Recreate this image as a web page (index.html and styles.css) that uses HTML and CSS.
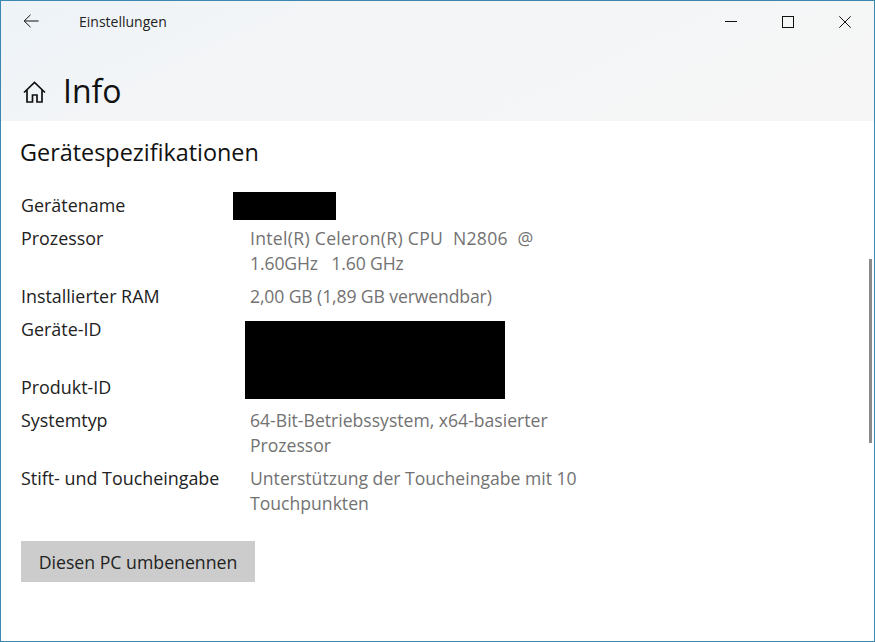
FILE: index.html
```html
<!DOCTYPE html>
<html lang="de">
<head>
<meta charset="utf-8">
<title>Einstellungen</title>
<link rel="stylesheet" href="styles.css">
</head>
<body>
<div class="window">
  <header class="header">
    <div class="titlebar">
      <svg class="back" width="16" height="14" viewBox="0 0 16 14"><path d="M7.500 .8 1.200 7l6.300 6.200M1.200 7H15.600" fill="none" stroke="#111" stroke-width="1"/></svg>
      <span class="apptitle">Einstellungen</span>
      <div class="controls">
        <svg width="12" height="12" viewBox="0 0 12 12"><path d="M0 5.500H12" stroke="#111" stroke-width="1"/></svg>
        <svg width="12" height="12" viewBox="0 0 12 12"><rect x=".5" y=".5" width="11" height="11" fill="none" stroke="#111" stroke-width="1"/></svg>
        <svg width="12" height="12" viewBox="0 0 12 12"><path d="M.3 .3 11.700 11.700M11.700 .3 .3 11.700" stroke="#111" stroke-width="1"/></svg>
      </div>
    </div>
    <div class="pagehead">
      <svg width="23" height="23" viewBox="0 0 23 23"><path d="M1 11.500 11.500 1.500 22 11.500M4 9v12h5.500v-7h4.500v7H19V9" fill="none" stroke="#111" stroke-width="1.700"/></svg>
      <h1>Info</h1>
    </div>
  </header>
  <main class="content">
    <h2>Gerätespezifikationen</h2>
    <dl class="specs">
      <dt>Gerätename</dt><dd></dd>
      <dt>Prozessor</dt><dd><span class="wide">Intel(R) Celeron(R) CPU&nbsp; N2806&nbsp; @</span><br><span class="narrow">1.60GHz&nbsp; &nbsp;1.60 GHz</span></dd>
      <dt>Installierter RAM</dt><dd><span class="narrow">2,00 GB (1,89 GB verwendbar)</span></dd>
      <dt class="tall">Geräte-ID</dt><dd class="tall"></dd>
      <dt>Produkt-ID</dt><dd></dd>
      <dt>Systemtyp</dt><dd>64-Bit-Betriebssystem, x64-basierter<br>Prozessor</dd>
      <dt>Stift- und Toucheingabe</dt><dd>Unterstützung der Toucheingabe mit 10<br>Touchpunkten</dd>
    </dl>
    <button class="rename">Diesen PC umbenennen</button>
    <div class="redact redact-name"></div>
    <div class="redact redact-ids"></div>
    <div class="scrollthumb"></div>
  </main>
</div>
</body>
</html>
```
FILE: styles.css
```css
* { box-sizing: border-box; }
html, body { margin: 0; height: 100%; }
body { font-family: "Open Sans", "Noto Sans", sans-serif; background: #fff; color: #111; }
.window {
  width: 875px; height: 642px;
  border: 1px solid #3a87b0;
  display: flex; flex-direction: column;
  overflow: hidden;
}
.header {
  height: 120px; flex: none;
  background: linear-gradient(155deg, #edf3f8 0%, #f3f5f7 30%, #f6f6f6 100%);
  display: flex; flex-direction: column;
}
.titlebar { height: 40px; display: flex; align-items: center; padding-left: 22px; }
.back { flex: none; }
.apptitle { margin-left: 40px; font-size: 14px; color: #222; }
.controls { margin-left: auto; display: flex; gap: 45px; padding: 2px 23px 0 0; align-items: center; }
.controls svg { display: block; }
.pagehead { display: flex; align-items: center; padding: 25px 0 0 22px; gap: 17px; }
.pagehead svg { flex: none; margin-top: 3px; }
h1 { margin: 0; font-size: 32px; font-weight: 400; line-height: 50px; color: #111; }
.content { position: relative; flex: 1; padding: 14px 0 0 20px; }
h2 { margin: 0 0 24px -1px; font-size: 23.400px; font-weight: 400; line-height: 34px; color: #111; }
.specs { margin: 0; display: grid; grid-template-columns: 229px 340px; row-gap: 8px; font-size: 17.600px; line-height: 25px; }
.specs dt { color: #222; font-size: 17.900px; }
.specs dd { margin: 0; min-height: 25px; color: #727272; }
.specs .tall { min-height: 50px; }
.wide { letter-spacing: .3px; }
.narrow { letter-spacing: -.12px; }
.rename {
  display: block; margin-top: 25px;
  width: 234px; height: 41px; padding: 1px 0 0;
  border: 0; background: #cccccc; color: #222;
  font: 400 17.700px "Open Sans", "Noto Sans", sans-serif;
}
.redact { position: absolute; background: #000; }
.redact-name { left: 232px; top: 71px; width: 103px; height: 28px; }
.redact-ids { left: 244px; top: 200px; width: 260px; height: 78px; }
.scrollthumb { position: absolute; right: 2px; top: 138px; width: 3px; height: 184px; background: #8a8a8a; }
```
